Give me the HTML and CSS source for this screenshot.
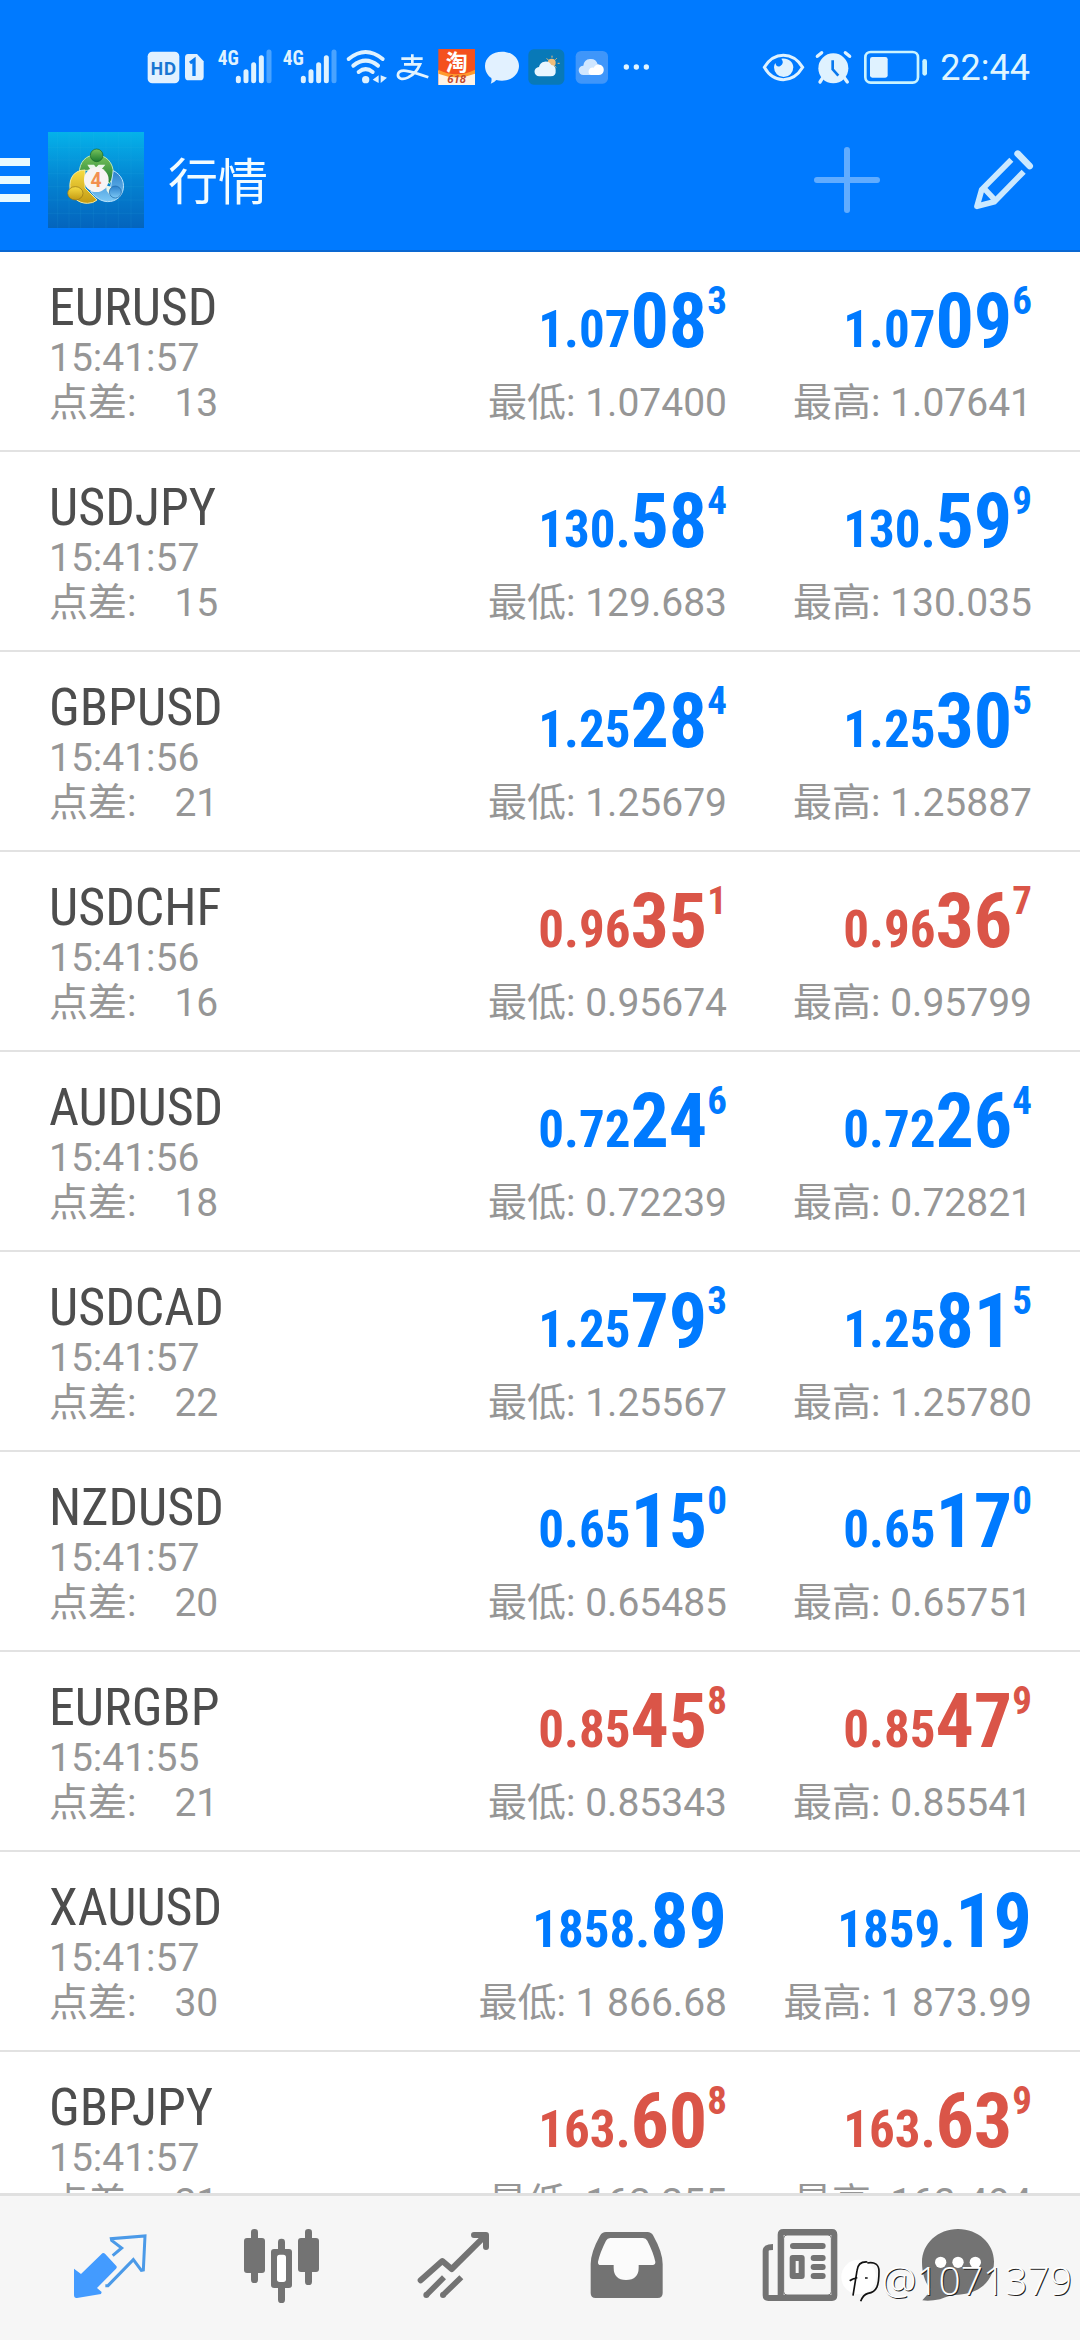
FILE: index.html
```html
<!DOCTYPE html>
<html lang="zh-CN">
<head>
<meta charset="utf-8">
<meta name="viewport" content="width=device-width">
<title>行情</title>
<link rel="stylesheet" href="styles.css">
</head>
<body>
<header class="header">
  <div class="status">
    <svg width="65" height="70" viewBox="45 0 195 210"><rect x="53" y="62" width="95" height="95" rx="14" fill="#e2f1ff"/><text class="hd" x="100" y="133" text-anchor="middle">HD</text><path d="M174 69h27l20 22v46q0 11-11 11h-34q-11 0-11-11V80q0-11 9-11z" fill="#e2f1ff"/><path d="M180 96l12-9v48" fill="none" stroke="#0878ee" stroke-width="10"/></svg>
    <svg width="65" height="70" viewBox="240 0 195 210"><text class="net" x="263" y="101">4G</text><path d="M325 142v7M348 122v27M371 101v48M394 80v69" class="bar"/><path d="M417 63v86" class="bar dim"/></svg>
    <svg width="65" height="70" viewBox="240 0 195 210"><text class="net" x="263" y="101">4G</text><path d="M325 142v7M348 122v27M371 101v48M394 80v69" class="bar"/><path d="M417 63v86" class="bar dim"/></svg>
    <svg width="50" height="70" viewBox="630 0 150 210"><g fill="none" stroke="#dff2ff" stroke-width="12" stroke-linecap="round"><path d="M656 84q51-42 102 0M670 104q37-30 74 0M686 123q21-17 42 0"/></g><circle cx="707" cy="146" r="11" fill="#dff2ff"/><path d="M746 133v23l-18-10zM752 133v23l19-16z" fill="#dff2ff"/></svg>
    <svg width="43" height="70" viewBox="0 0 129 210"><g fill="none" stroke="#e2f4ff" stroke-width="8"><path d="M34 83h64M67 70v30M42 100h48q-13 29-35 39c-20 10-33 2-31-9 3-18 31-13 91 9"/></g></svg>
    <svg width="47" height="70" viewBox="129 0 141 210"><rect x="145" y="54" width="110" height="108" fill="#f4511e"/><path d="M145 119q55 27 110 0v43H145z" fill="#fff3e6"/><path d="M145 116q55 27 110 0v12q-55 22-110 0z" fill="#ff9a2e"/><text class="tao" x="200" y="116" text-anchor="middle">淘</text><text class="sale" x="200" y="157" text-anchor="middle">618</text></svg>
    <svg width="44" height="70" viewBox="270 0 132 210"><path d="M336 62c29 0 51 18 51 43s-22 44-51 44q-10 0-17-2-8 9-17 11 4-7 2-17c-12-8-19-21-19-36 0-25 22-43 51-43z" fill="#e2f1ff"/></svg>
    <svg width="46" height="70" viewBox="402 0 138 210"><rect x="415" y="55" width="108" height="106" rx="16" fill="#0879b8"/><circle cx="485" cy="95" r="12" fill="#f0bd7a"/><path d="M486 74v6M470 82l5 5M500 82l-4 4M503 97h6M499 109l-4-3" stroke="#f0bd7a" stroke-width="3"/><path d="M448 136a14 14 0 0 1-1-28 20 20 0 0 1 37-6 15 15 0 0 1 13 15q2 19-15 19z" fill="#e8f6ff"/></svg>
    <svg width="44" height="70" viewBox="540 0 132 210"><rect x="557" y="60" width="97" height="98" rx="16" fill="#3f96fa"/><path d="M580 132a14 14 0 0 1 0-28 22 22 0 0 1 43-4 17 17 0 0 1 1 32z" fill="#cfe6ff"/><path d="M604 132q-10-2-8-13 4-11 15-9 8-14 22-8 10 6 8 18-3 12-15 12z" fill="#fff"/></svg>
    <svg width="43" height="70" viewBox="672 0 129 210"><g fill="#e2f4ff"><circle cx="709" cy="108" r="8"/><circle cx="739" cy="108" r="8"/><circle cx="769" cy="108" r="8"/></g></svg>
    <svg class="status-right" width="49" height="70" viewBox="24 0 147 210"><path d="M40 109q22-36 57-36t58 36q-22 37-58 37t-57-37z" fill="none" stroke="#dff2ff" stroke-width="9"/><path d="M91 83c17-4 36 7 36 26a29 29 0 0 1-58 0q0-7 4-13 4 15 15 9 13-9 3-22z" fill="#dff2ff"/></svg>
    <svg width="48" height="70" viewBox="171 0 144 210"><circle cx="247" cy="112" r="45" fill="#dff2ff"/><path d="M199 76l13-11M296 76l-13-11M214 142l-7 11M281 142l8 11" stroke="#dff2ff" stroke-width="10" stroke-linecap="round"/><path d="M245 88v27l17 19" fill="none" stroke="#0878ee" stroke-width="8"/></svg>
    <svg width="75" height="70" viewBox="315 0 225 210"><rect x="343" y="63" width="158" height="92" rx="16" fill="none" stroke="#c9f3ff" stroke-width="8"/><rect x="357" y="78" width="53" height="62" rx="7" fill="#dff2ff"/><rect x="514" y="84" width="14" height="50" rx="7" fill="#c9f3ff"/></svg>
    <time class="clock">22:44</time>
  </div>
  <div class="toolbar">
    <button class="menu" aria-label="菜单"><svg width="30" height="44" viewBox="0 0 30 44"><path d="M0 4h30M0 22h30M0 40h30" stroke="#e8faff" stroke-width="8"/></svg></button>
    <svg class="logo" width="96" height="96" viewBox="144 36 288 288">
      <defs>
        <linearGradient id="sky" x2="0" y2="1"><stop offset="0" stop-color="#05b2ea"/><stop offset=".5" stop-color="#0484d2"/><stop offset="1" stop-color="#0464bd"/></linearGradient>
        <linearGradient id="green" x2="0" y2="1"><stop offset="0" stop-color="#78c35c"/><stop offset="1" stop-color="#1d7c30"/></linearGradient>
        <linearGradient id="gold" x2="0" y2="1"><stop offset="0" stop-color="#f7dc43"/><stop offset="1" stop-color="#c39a13"/></linearGradient>
        <linearGradient id="blue" x2="0" y2="1"><stop offset="0" stop-color="#2b80cc"/><stop offset="1" stop-color="#7cc8f5"/></linearGradient>
      </defs>
      <rect x="144" y="36" width="288" height="288" fill="url(#sky)"/>
      <path d="M173 36v288M207 36v288M242 36v288M280 36v288M318 36v288M355 36v288M393 36v288M144 83h288M144 120h288M144 160h288M144 200h288M144 240h288M144 280h288" stroke="#4cc3ee" stroke-opacity=".15" stroke-width="2"/>
      <path d="M238 160c0-35 20-55 50-55s52 22 52 56q-2 18-12 30l-30-40h-42z" fill="url(#green)" stroke="#bfe6b0" stroke-width="3"/>
      <path d="M340 152c25 12 36 38 28 62-9 28-40 38-66 26q-19-9-30-26l60-14z" fill="url(#blue)" stroke="#b9e2fb" stroke-width="3"/>
      <path d="M255 150c-32 0-48 24-45 54 3 27 24 46 52 46q18 0 29-10l-36-36z" fill="url(#gold)" stroke="#f8ec9c" stroke-width="3"/>
      <path d="M262 134h20l6 8 8-8h20l-18 22h-22zM318 196l24 8-12 22-10-14z" fill="#e9f6ea"/>
      <circle cx="290" cy="106" r="19" fill="url(#green)" stroke="#176525" stroke-width="2"/>
      <ellipse cx="226" cy="220" rx="23" ry="20" fill="url(#gold)" stroke="#937317" stroke-width="2"/>
      <circle cx="346" cy="216" r="18" fill="url(#blue)" stroke="#1c67a7" stroke-width="2"/>
      <circle cx="289" cy="179" r="37" fill="#f7f4f4"/>
      <text class="four" x="288" y="200" text-anchor="middle">4</text>
    </svg>
    <h1 class="title">行情</h1>
    <button class="tool add" aria-label="添加"><svg width="66" height="66" viewBox="0 0 66 66"><path d="M3 33h60M33 3v60" stroke="#fff" stroke-opacity=".38" stroke-width="6" stroke-linecap="round"/></svg></button>
    <button class="tool" aria-label="编辑"><svg width="60" height="60" viewBox="549 60 180 180"><g fill="none" stroke="#cbe9ff" stroke-width="17"><path d="M661 89l-89 90-14 50 52-14 88-90M577 173l36 38" stroke-linejoin="round"/><path d="M680 71l36 37" stroke-width="20" stroke-linecap="round"/></g></svg></button>
  </div>
</header>
<main class="quotes">
  <table class="table">
    <colgroup><col><col class="col-bid"><col class="col-ask"></colgroup>
    <tbody id="rows"></tbody>
  </table>
</main>
<nav class="tabs">
  <a href="#quotes" class="tab active" aria-label="行情"><svg width="100" height="90" viewBox="180 159 300 270"><path d="M222 296l21 16 64-62q4-3 8 1l34 37q3 4-1 8l-57 58 14 12-2 6-72 12q-9 1-9-9z" fill="#439bff"/><path d="M338 257l27-23-30-23-1-5 101-8-5 102-6 1-24-32-76 78h-8" fill="none" stroke="#4b9ae8" stroke-width="9"/></svg></a>
  <a href="#chart" class="tab" aria-label="图表"><svg width="100" height="90" viewBox="696 159 300 270"><g fill="currentColor"><rect x="732" y="204" width="63" height="105" rx="9"/><rect x="753" y="177" width="21" height="162" rx="10"/><rect x="894" y="204" width="63" height="102" rx="9"/><rect x="915" y="177" width="21" height="168" rx="10"/><rect x="834" y="206" width="21" height="40" rx="10"/><rect x="834" y="340" width="21" height="59" rx="10"/><rect x="813" y="237" width="63" height="117" rx="9"/></g><rect x="831" y="254" width="27" height="82" rx="8" fill="#fff"/></svg></a>
  <a href="#trade" class="tab" aria-label="交易"><svg width="100" height="90" viewBox="132 159 300 270"><g fill="none" stroke="currentColor" stroke-width="17"><path d="M182 331l65-58 28 24 98-97M342 195h36v36" stroke-linecap="round" stroke-linejoin="round" stroke-width="18"/><path d="M252 322l-53 53M304 322l-55 53"/></g><g fill="currentColor"><circle cx="199" cy="375" r="9"/><circle cx="249" cy="375" r="9"/></g></svg></a>
  <a href="#history" class="tab" aria-label="历史"><svg width="100" height="90" viewBox="648 159 300 270"><path d="M738 186h124q12 0 18 11 28 50 28 85v87q0 15-15 15H707q-15 0-15-15v-87q0-35 28-85 6-11 18-11z" fill="currentColor"/><path d="M751 204h98q9 0 13 8 18 35 24 63 1 9-8 10h-42v8q0 36-38 37-37-1-37-37v-8h-39q-9 0-8-10 6-28 24-63 4-8 13-8z" fill="#fbfbfb"/></svg></a>
  <a href="#news" class="tab" aria-label="新闻"><svg width="100" height="90" viewBox="84 159 300 270"><g fill="none" stroke="currentColor" stroke-width="18"><path d="M182 376V194q0-8 8-8h146q7 0 7 8v182q0 8-7 8H145q-8 0-8-8V243q0-12 22-12"/><path d="M219 228h89M281 264h27M281 291h27M281 318h27" stroke-linecap="round"/></g><rect x="191" y="195" width="143" height="180" rx="10" fill="none" stroke="currentColor" stroke-width="3"/><rect x="218" y="264" width="27" height="54" fill="none" stroke="currentColor" stroke-width="18" stroke-linejoin="round"/></svg></a>
  <a href="#messages" class="tab" aria-label="消息"><svg width="100" height="90" viewBox="600 159 300 270"><path d="M714 177c60 0 108 43 108 98s-42 96-106 99q-29 0-56 14-30 6-53 3 16-15 24-34c-17-21-25-48-25-80 0-57 48-100 108-100z" fill="currentColor"/><g fill="#fff"><circle cx="662" cy="277" r="17"/><circle cx="714" cy="277" r="17"/><circle cx="766" cy="277" r="17"/></g></svg></a>
  <div class="watermark"><svg width="42" height="46" viewBox="370 270 126 138"><circle cx="426" cy="330" r="52" fill="#fff"/><path d="M452 285q-28-2-31 26l-12 75M399 341q15-9 23-8M452 288c23-4 35 5 35 25 0 42-6 62-33 66q-15 4-22 24M445 333h8" fill="none" stroke="#111" stroke-width="5"/></svg><span>@1071379</span></div>
</nav>
<script src="quotes.js"></script>
</body>
</html>
```
FILE: styles.css
```css
* { box-sizing: border-box; }

body {
  margin: 0;
  height: 100vh;
  display: flex;
  flex-direction: column;
  background: #fff;
  color: #969696;
  font-family: Roboto, "Noto Sans CJK SC", sans-serif;
}

svg { display: block; flex: none; }

button {
  margin: 0;
  padding: 0;
  border: 0;
  background: none;
}

/* Header */
.header {
  flex: none;
  padding-bottom: 22px;
  border-bottom: 2px solid #0a68d2;
  background: #007aff;
}

.status {
  display: flex;
  align-items: center;
  height: 132px;
  padding: 0 50px 0 145px;
}

.status-right { margin-left: auto; }

.clock {
  margin-left: 9px;
  color: #dff5ff;
  font-size: 36px;
  line-height: 40px;
  padding-top: 4px;
}

.hd { fill: #1976d2; font: 700 52px "Open Sans", sans-serif; }
.net { fill: #dff2ff; font: 700 58px "Roboto Condensed", "Liberation Sans Narrow", sans-serif; }
.bar { fill: none; stroke: #dff2ff; stroke-width: 15; stroke-linecap: round; }
.dim { stroke: #4aa3ff; }
.tao { fill: #fff; font: 700 66px "Noto Sans CJK SC", sans-serif; }
.sale { fill: #c4472c; font: italic 700 34px Roboto, sans-serif; }
.four { fill: #f29050; font: 700 58px Roboto, sans-serif; }

.toolbar {
  display: flex;
  align-items: center;
  padding-right: 46px;
}

.logo { margin-left: 18px; }

.title {
  margin: 0 auto 0 24px;
  padding-top: 6px;
  color: #f2fcff;
  font-size: 50px;
  font-weight: 400;
  line-height: 60px;
}

.add { margin-right: 94px; }

/* Quotes */
.quotes {
  flex: 1;
  min-height: 0;
  overflow: hidden;
}

.table {
  width: 100%;
  table-layout: fixed;
  border-collapse: separate;
  border-spacing: 0;
}

.col-bid { width: 306px; }
.col-ask { width: 353px; }

.table td {
  height: 200px;
  padding: 27px 0 0;
  border-bottom: 2px solid #e2e2e2;
  vertical-align: top;
  font-size: 39px;
  line-height: 45px;
  text-align: right;
  white-space: nowrap;
}

.table td:first-child {
  padding-left: 49px;
  text-align: left;
}

.table td:last-child { padding-right: 48px; }

.symbol {
  color: #4d4d4d;
  font-family: "Roboto Condensed", "Liberation Sans Narrow", Roboto, sans-serif;
  font-size: 52px;
  line-height: 57px;
}

.spread { display: flex; gap: 38px; }

.price {
  display: flex;
  justify-content: flex-end;
  align-items: baseline;
  height: 102px;
  color: #007aff;
  font-family: "Roboto Condensed", "Liberation Sans Narrow", Roboto, sans-serif;
  font-size: 51px;
  font-weight: 700;
  line-height: 84px;
}

.down { color: #da5548; }
.big { font-size: 76px; }

.pip {
  align-self: flex-start;
  font-size: 39px;
  line-height: 45px;
}

/* Bottom tabs */
.tabs {
  position: relative;
  flex: none;
  display: flex;
  align-items: center;
  height: 147px;
  padding: 0 24px;
  border-top: 3px solid #e0e0e0;
  background: #f6f6f6;
}

.tab {
  flex: 1;
  display: flex;
  justify-content: center;
  color: #737373;
}

.watermark {
  position: absolute;
  right: 8px;
  bottom: 35px;
  display: flex;
  align-items: center;
  color: #fff;
  font-family: "Open Sans", sans-serif;
  font-size: 39px;
  font-weight: 300;
  line-height: 50px;
  text-shadow: 1px 1px 0 #222;
}
```
FILE: quotes.js
```js
// symbol, time, spread, bid [small, big, pip], low, ask [small, big, pip], high, falling
const quotes = [
  ["EURUSD", "15:41:57", "13", ["1.07", "08", "3"], "1.07400", ["1.07", "09", "6"], "1.07641", false],
  ["USDJPY", "15:41:57", "15", ["130.", "58", "4"], "129.683", ["130.", "59", "9"], "130.035", false],
  ["GBPUSD", "15:41:56", "21", ["1.25", "28", "4"], "1.25679", ["1.25", "30", "5"], "1.25887", false],
  ["USDCHF", "15:41:56", "16", ["0.96", "35", "1"], "0.95674", ["0.96", "36", "7"], "0.95799", true],
  ["AUDUSD", "15:41:56", "18", ["0.72", "24", "6"], "0.72239", ["0.72", "26", "4"], "0.72821", false],
  ["USDCAD", "15:41:57", "22", ["1.25", "79", "3"], "1.25567", ["1.25", "81", "5"], "1.25780", false],
  ["NZDUSD", "15:41:57", "20", ["0.65", "15", "0"], "0.65485", ["0.65", "17", "0"], "0.65751", false],
  ["EURGBP", "15:41:55", "21", ["0.85", "45", "8"], "0.85343", ["0.85", "47", "9"], "0.85541", true],
  ["XAUUSD", "15:41:57", "30", ["1858.", "89", ""], "1 866.68", ["1859.", "19", ""], "1 873.99", false],
  ["GBPJPY", "15:41:57", "21", ["163.", "60", "8"], "162.255", ["163.", "63", "9"], "163.494", true]
];

const price = ([small, big, pip], down) =>
  `<div class="price${down ? " down" : ""}"><span>${small}</span><span class="big">${big}</span>` +
  (pip ? `<span class="pip">${pip}</span>` : "") + `</div>`;

document.getElementById("rows").innerHTML = quotes.map(
  ([symbol, time, spread, bid, low, ask, high, down]) => `<tr>
    <td><div class="symbol">${symbol}</div><div>${time}</div><div class="spread"><span>点差:</span><span>${spread}</span></div></td>
    <td>${price(bid, down)}<div>最低: ${low}</div></td>
    <td>${price(ask, down)}<div>最高: ${high}</div></td>
  </tr>`).join("");
```
